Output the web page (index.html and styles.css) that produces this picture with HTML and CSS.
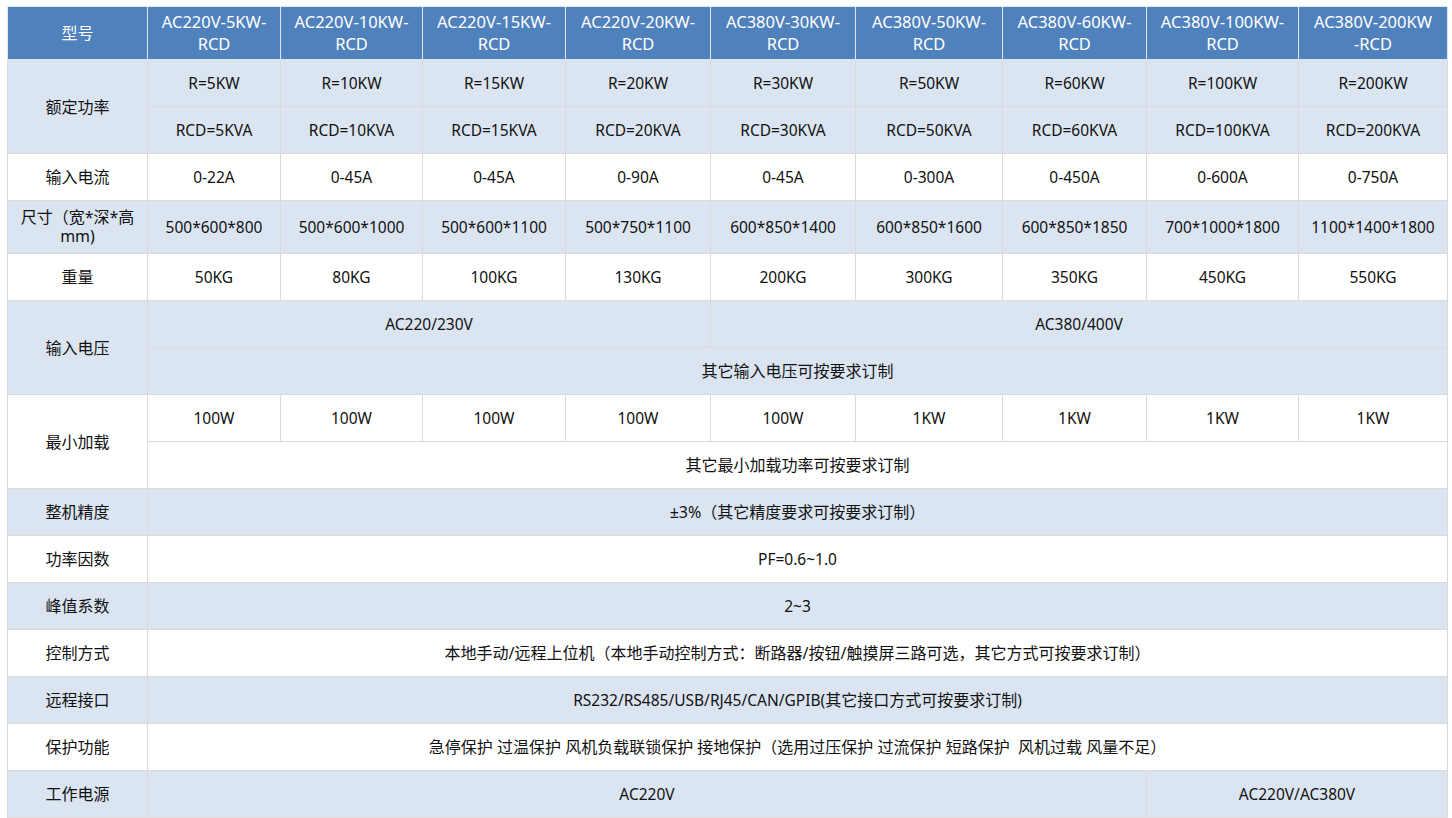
FILE: index.html
```html
<!DOCTYPE html>
<html lang="zh-CN">
<head>
<meta charset="utf-8">
<title>规格参数</title>
<link rel="stylesheet" href="styles.css">
</head>
<body>
<table class="spec">
  <colgroup>
    <col class="c0"><col class="c1"><col class="c2"><col class="c3"><col class="c4">
    <col class="c5"><col class="c6"><col class="c7"><col class="c8"><col class="c9">
  </colgroup>
  <thead>
    <tr class="head">
      <th>型号</th>
      <th>AC220V-5KW-<br>RCD</th>
      <th>AC220V-10KW-<br>RCD</th>
      <th>AC220V-15KW-<br>RCD</th>
      <th>AC220V-20KW-<br>RCD</th>
      <th>AC380V-30KW-<br>RCD</th>
      <th>AC380V-50KW-<br>RCD</th>
      <th>AC380V-60KW-<br>RCD</th>
      <th>AC380V-100KW-<br>RCD</th>
      <th>AC380V-200KW<br>-RCD</th>
    </tr>
  </thead>
  <tbody>
    <tr class="alt">
      <td rowspan="2" class="label">额定功率</td>
      <td>R=5KW</td><td>R=10KW</td><td>R=15KW</td><td>R=20KW</td><td>R=30KW</td>
      <td>R=50KW</td><td>R=60KW</td><td>R=100KW</td><td>R=200KW</td>
    </tr>
    <tr class="alt">
      <td>RCD=5KVA</td><td>RCD=10KVA</td><td>RCD=15KVA</td><td>RCD=20KVA</td><td>RCD=30KVA</td>
      <td>RCD=50KVA</td><td>RCD=60KVA</td><td>RCD=100KVA</td><td>RCD=200KVA</td>
    </tr>
    <tr>
      <td class="label">输入电流</td>
      <td>0-22A</td><td>0-45A</td><td>0-45A</td><td>0-90A</td><td>0-45A</td>
      <td>0-300A</td><td>0-450A</td><td>0-600A</td><td>0-750A</td>
    </tr>
    <tr class="alt tall">
      <td class="label wrap">尺寸（宽*深*高mm)</td>
      <td>500*600*800</td><td>500*600*1000</td><td>500*600*1100</td><td>500*750*1100</td><td>600*850*1400</td>
      <td>600*850*1600</td><td>600*850*1850</td><td>700*1000*1800</td><td>1100*1400*1800</td>
    </tr>
    <tr>
      <td class="label">重量</td>
      <td>50KG</td><td>80KG</td><td>100KG</td><td>130KG</td><td>200KG</td>
      <td>300KG</td><td>350KG</td><td>450KG</td><td>550KG</td>
    </tr>
    <tr class="alt">
      <td rowspan="2" class="label">输入电压</td>
      <td colspan="4">AC220/230V</td>
      <td colspan="5">AC380/400V</td>
    </tr>
    <tr class="alt">
      <td colspan="9" class="cn">其它输入电压可按要求订制</td>
    </tr>
    <tr>
      <td rowspan="2" class="label">最小加载</td>
      <td>100W</td><td>100W</td><td>100W</td><td>100W</td><td>100W</td>
      <td>1KW</td><td>1KW</td><td>1KW</td><td>1KW</td>
    </tr>
    <tr>
      <td colspan="9" class="cn">其它最小加载功率可按要求订制</td>
    </tr>
    <tr class="alt">
      <td class="label">整机精度</td>
      <td colspan="9" class="cn">±3%（其它精度要求可按要求订制）</td>
    </tr>
    <tr>
      <td class="label">功率因数</td>
      <td colspan="9">PF=0.6~1.0</td>
    </tr>
    <tr class="alt">
      <td class="label">峰值系数</td>
      <td colspan="9">2~3</td>
    </tr>
    <tr>
      <td class="label">控制方式</td>
      <td colspan="9" class="cn">本地手动/远程上位机（本地手动控制方式：断路器/按钮/触摸屏三路可选，其它方式可按要求订制）</td>
    </tr>
    <tr class="alt">
      <td class="label">远程接口</td>
      <td colspan="9">RS232/RS485/USB/RJ45/CAN/GPIB(<span class="cn">其它接口方式可按要求订制</span>)</td>
    </tr>
    <tr>
      <td class="label">保护功能</td>
      <td colspan="9" class="cn">急停保护 过温保护 风机负载联锁保护 接地保护（选用过压保护 过流保护 短路保护&nbsp; 风机过载 风量不足）</td>
    </tr>
    <tr class="alt">
      <td class="label">工作电源</td>
      <td colspan="7">AC220V</td>
      <td colspan="2">AC220V/AC380V</td>
    </tr>
  </tbody>
</table>
</body>
</html>
```

FILE: styles.css
```css
html, body {
  margin: 0;
  padding: 0;
  background: #ffffff;
}

body {
  padding: 6px 0 0 7px;
  font-family: "Noto Sans", "Noto Sans CJK SC", sans-serif;
  font-size: 15.5px;
  color: #111111;
}

.spec {
  border-collapse: collapse;
  table-layout: fixed;
  width: 1440px;
}

.c0 { width: 140px; }
.c1 { width: 133px; }
.c2 { width: 142px; }
.c3 { width: 143px; }
.c4 { width: 145px; }
.c5 { width: 145px; }
.c6 { width: 147px; }
.c7 { width: 144px; }
.c8 { width: 152px; }
.c9 { width: 149px; }

.spec th,
.spec td {
  border: 1px solid #dadada;
  text-align: center;
  vertical-align: middle;
  padding: 0 4px;
  line-height: 20px;
  white-space: nowrap;
}

.spec tr {
  height: 47px;
}

.spec tr.head {
  height: 53px;
}

.spec tr.tall {
  height: 53px;
}

.head th {
  background: #4f81bd;
  color: #ffffff;
  font-weight: normal;
  font-size: 16.5px;
  border-color: #dfe6ef;
  line-height: 22px;
}

.head th:first-child {
  font-size: 16px;
}

.spec tr.alt td {
  background: #dbe5f1;
}

.spec td.label,
.cn {
  font-size: 16px;
}

.spec td.wrap {
  white-space: normal;
  line-height: 19px;
  padding: 0 8px;
}
```
